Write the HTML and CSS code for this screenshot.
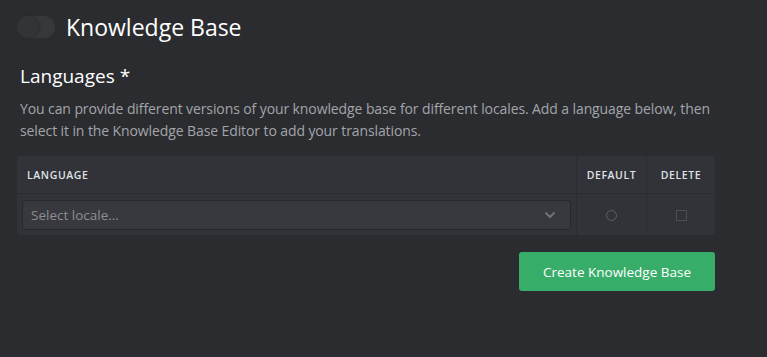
FILE: index.html
```html
<!DOCTYPE html>
<html lang="en">
<head>
    <meta charset="UTF-8">
    <meta name="viewport" content="width=device-width, initial-scale=1.0">
    <title>Knowledge Base</title>
    <link rel="stylesheet" href="styles.css">
</head>
<body>
    <div class="page">
        <header class="page-header">
            <span class="switch"><span class="switch-knob"></span></span>
            <h1>Knowledge Base</h1>
        </header>

        <section class="languages">
            <h2>Languages *</h2>
            <p class="help">You can provide different versions of your knowledge base for different locales. Add a language below, then select it in the Knowledge Base Editor to add your translations.</p>

            <table class="lang-table">
                <colgroup>
                    <col class="w-lang">
                    <col class="w-default">
                    <col class="w-delete">
                </colgroup>
                <thead>
                    <tr>
                        <th class="col-lang">Language</th>
                        <th class="col-default">Default</th>
                        <th class="col-delete">Delete</th>
                    </tr>
                </thead>
                <tbody>
                    <tr>
                        <td class="col-lang">
                            <div class="select">
                                <span>Select locale...</span>
                                <svg class="caret" width="12" height="8" viewBox="0 0 12 8">
                                    <path d="M1.5 1.5 L6 6 L10.5 1.5" fill="none" stroke="currentColor" stroke-width="2"/>
                                </svg>
                            </div>
                        </td>
                        <td class="col-default"><span class="radio"></span></td>
                        <td class="col-delete"><span class="checkbox"></span></td>
                    </tr>
                </tbody>
            </table>

            <div class="actions">
                <button class="btn-create" type="button">Create Knowledge Base</button>
            </div>
        </section>
    </div>
</body>
</html>
```

FILE: styles.css
```css
body {
    margin: 0;
    padding: 0;
    background-color: #2b2c30;
    color: #e6e8ea;
    font-family: 'Open Sans', 'Noto Sans', sans-serif;
}

.page {
    width: 698px;
    padding: 0 0 0 17px;
}

.page-header {
    display: flex;
    align-items: center;
    gap: 11px;
    padding-top: 16px;
    height: 22px;
}

.page-header h1 {
    margin: 0;
    font-size: 23px;
    font-weight: 400;
    color: #ffffff;
    letter-spacing: 0;
}

.switch {
    display: block;
    width: 38px;
    height: 22px;
    border-radius: 11px;
    background-color: #37383c;
}

.switch-knob {
    display: block;
    width: 22px;
    height: 22px;
    border-radius: 50%;
    background-color: #333438;
    box-shadow: 1px 0 2px rgba(0, 0, 0, 0.25);
}

.languages {
    padding-top: 26px;
}

.languages h2 {
    margin: 0 0 0 3px;
    font-size: 19px;
    font-weight: 400;
    color: #ffffff;
    line-height: 24px;
}

.help {
    margin: 10px 0 14px 3px;
    font-size: 14px;
    line-height: 22px;
    color: #a2a5a9;
    letter-spacing: -0.1px;
}

.lang-table {
    width: 698px;
    table-layout: fixed;
    border-collapse: separate;
    border-spacing: 0;
    background-color: #323338;
    border-radius: 3px;
}

.w-lang {
    width: 559px;
}

.w-default {
    width: 70px;
}

.w-delete {
    width: 69px;
}

.lang-table th {
    height: 37px;
    padding: 0;
    font-size: 10.5px;
    font-weight: 600;
    letter-spacing: 0.6px;
    text-transform: uppercase;
    color: #dfe2e5;
    border-bottom: 1px solid #2b2c30;
    text-align: center;
}

.lang-table th.col-lang {
    padding-left: 10px;
    text-align: left;
}

.lang-table td {
    height: 41px;
    padding: 0;
    text-align: center;
    vertical-align: middle;
}

.lang-table .col-default,
.lang-table .col-delete {
    border-left: 1px solid #2b2c30;
}

.lang-table td.col-lang {
    padding: 0 5px;
}

.select {
    display: flex;
    align-items: center;
    justify-content: space-between;
    height: 28px;
    padding: 0 14px 0 8px;
    background-color: #38393e;
    border: 1px solid #27282b;
    border-radius: 3px;
    font-size: 13.5px;
    color: #8b8e92;
}

.caret {
    color: #6f7276;
}

.radio {
    display: inline-block;
    width: 9px;
    height: 9px;
    border: 1px solid #5d6064;
    border-radius: 50%;
}

.checkbox {
    display: inline-block;
    width: 9px;
    height: 9px;
    border: 1px solid #4b4e52;
}

.actions {
    display: flex;
    justify-content: flex-end;
    margin-top: 17px;
}

.btn-create {
    width: 196px;
    height: 39px;
    border: none;
    border-radius: 3px;
    background-color: #38ad69;
    color: #ffffff;
    font-family: 'Open Sans', 'Noto Sans', sans-serif;
    font-size: 13.5px;
    cursor: pointer;
}
```
